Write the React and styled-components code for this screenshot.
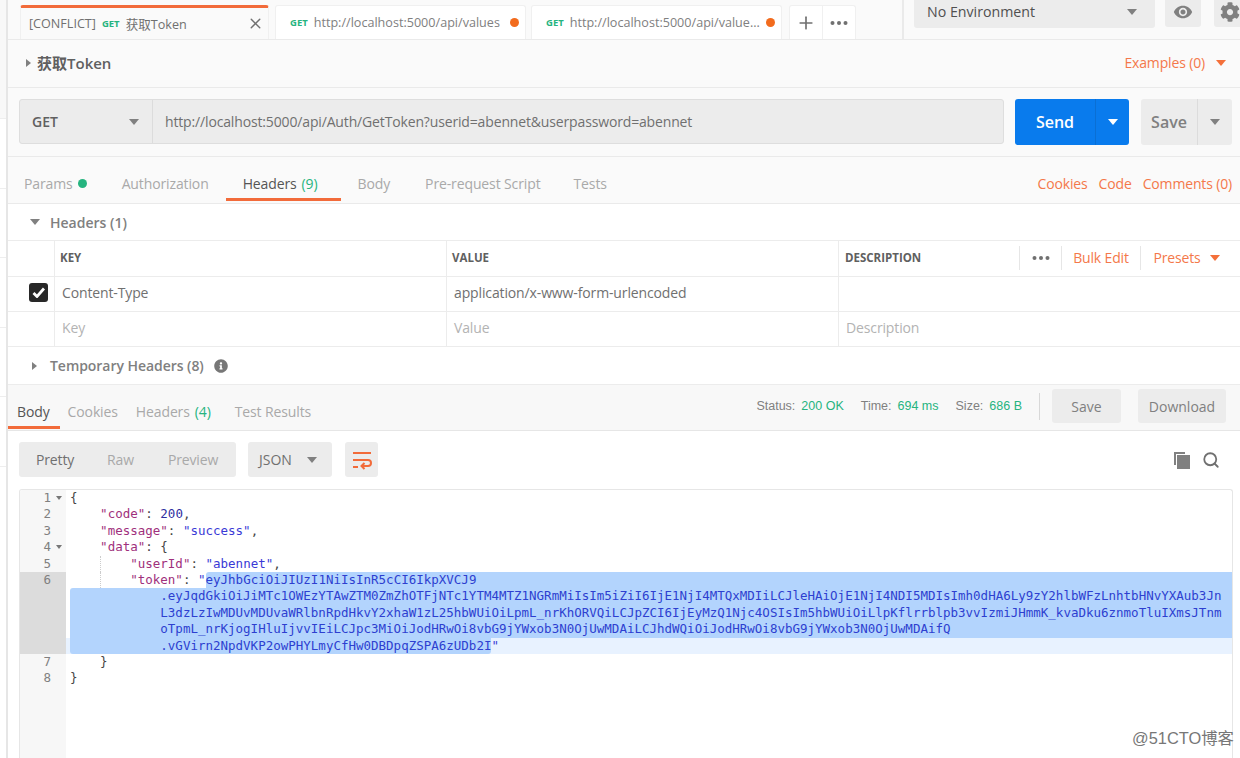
import styled, { createGlobalStyle } from "styled-components";
import { Plus, Search, X } from "lucide-react";
import { FaCog, FaInfoCircle } from "react-icons/fa";
import { MdVisibility } from "react-icons/md";

const UI_FONT = `"Open Sans", "Noto Sans CJK SC", sans-serif`;

const Global = createGlobalStyle`
  html, body { margin: 0; padding: 0; background: #fff; }
  body { width: 1240px; height: 758px; overflow: hidden; font-family: ${UI_FONT}; }
  * { box-sizing: border-box; }
`;

const Page = styled.div`
  display: flex;
  width: 1240px;
  height: 758px;
  overflow: hidden;
  position: relative;
`;

const Strip = styled.div`
  width: 8px;
  flex: none;
  border-right: 2px solid #e6e6e6;
  background: #fff;
`;
const StripTop = styled.div`
  height: 119px;
  background: #f8f8f8;
  border-bottom: 1px solid #eee;
`;
const StripRows = styled.div`
  height: 348px;
  background: repeating-linear-gradient(to bottom, #fff 0, #fff 68.6px, #eee 68.6px, #eee 69.6px);
`;

const Main = styled.div`
  flex: 1;
  min-width: 0;
  display: flex;
  flex-direction: column;
`;

const TabBar = styled.div`
  height: 40px;
  flex: none;
  display: flex;
  padding-left: 12px;
  background: #fafafa;
  border-bottom: 1px solid #eaeaea;
  overflow: hidden;
`;
const Tab = styled.div`
  flex: none;
  width: ${(p) => p.$w}px;
  margin-left: ${(p) => p.$gap || 0}px;
  margin-top: 5px;
  height: ${(p) => (p.$active ? 35 : 34)}px;
  display: flex;
  align-items: center;
  padding: 0 ${(p) => p.$pr || 6}px 1px ${(p) => p.$pl || 14}px;
  font-size: 12.6px;
  color: #808080;
  white-space: nowrap;
  background: ${(p) => (p.$active ? "#fafafa" : "#fff")};
  border: 1px solid #f0f0f0;
  border-bottom: none;
  border-top: ${(p) => (p.$active ? "3px solid #f26b3a" : "1px solid #f0f0f0")};
  border-radius: 3px 3px 0 0;
`;
const Conflict = styled.span`
  color: #707070;
  margin-right: 6px;
`;
const Method = styled.span`
  color: #26b47f;
  font-size: 9.5px;
  font-weight: 700;
  margin-right: 6px;
`;
const TabTitle = styled.span`
  flex: 1;
  min-width: 0;
  overflow: hidden;
  color: ${(p) => p.$color || "#808080"};
`;
const Dirty = styled.span`
  width: 9px;
  height: 9px;
  flex: none;
  margin-left: 5px;
  border-radius: 50%;
  background: #f26b1d;
`;
const TabActions = styled.div`
  display: flex;
  flex: none;
  width: 67px;
  margin: 5px 0 0 7px;
  height: 34px;
  background: #fff;
  border: 1px solid #f0f0f0;
  border-bottom: none;
  border-radius: 3px 3px 0 0;
`;
const TabAction = styled.div`
  flex: 1;
  display: flex;
  align-items: center;
  justify-content: center;
  color: #707070;
  & + & { border-left: 1px solid #f0f0f0; }
`;
const EnvArea = styled.div`
  display: flex;
  align-items: flex-start;
  margin-left: 46px;
  padding-left: 10px;
  border-left: 2px solid #eaeaea;
  flex: none;
`;
const EnvSelect = styled.div`
  width: 241px;
  height: 28px;
  display: flex;
  align-items: center;
  justify-content: space-between;
  padding: 0 18px 5px 13px;
  background: #ececec;
  border-radius: 0 0 3px 3px;
  color: #505050;
  font-size: 14.2px;
`;
const EnvButton = styled.div`
  width: ${(p) => p.$w}px;
  height: 27px;
  margin-left: ${(p) => p.$gap}px;
  display: flex;
  align-items: center;
  justify-content: ${(p) => p.$justify || "center"};
  background: #ececec;
  border-radius: 0 0 3px 3px;
  color: #808080;
  padding-bottom: 4px;
  padding-left: ${(p) => p.$pl || 0}px;
`;

const Caret = styled.span`
  display: inline-block;
  flex: none;
  width: 0;
  height: 0;
  ${(p) =>
    p.$dir === "right"
      ? `border-top: 4.5px solid transparent; border-bottom: 4.5px solid transparent; border-left: 5px solid ${p.$color || "#808080"};`
      : `border-left: 5px solid transparent; border-right: 5px solid transparent; border-top: 6px solid ${p.$color || "#808080"};`}
`;

const NameRow = styled.div`
  height: 48px;
  flex: none;
  display: flex;
  align-items: center;
  justify-content: space-between;
  padding: 0 14px 2px 18px;
  background: #fafafa;
  border-bottom: 1px solid #eaeaea;
`;
const RequestName = styled.div`
  display: flex;
  align-items: center;
  gap: 6px;
  font-size: 15px;
  font-weight: 600;
  color: #606060;
`;
const Link = styled.span`
  display: inline-flex;
  align-items: center;
  gap: ${(p) => p.$gap || 0}px;
  color: #f4784a;
  font-size: 14px;
  letter-spacing: -0.15px;
  white-space: nowrap;
`;

const UrlRow = styled.div`
  height: 69px;
  flex: none;
  display: flex;
  align-items: center;
  padding: 0 8px 1px 11px;
  background: #fafafa;
  border-bottom: 1px solid #eaeaea;
`;
const UrlGroup = styled.div`
  width: 985px;
  height: 45px;
  flex: none;
  display: flex;
  background: #ececec;
  border: 1px solid #dedede;
  border-radius: 3px;
`;
const MethodSelect = styled.div`
  width: 133px;
  flex: none;
  display: flex;
  align-items: center;
  justify-content: space-between;
  padding: 0 13px 0 12px;
  border-right: 1px solid #dcdcdc;
  color: #606060;
  font-size: 14px;
  font-weight: 600;
`;
const UrlText = styled.div`
  display: flex;
  align-items: center;
  padding-left: 12px;
  font-size: 14px;
  letter-spacing: -0.15px;
  color: #707070;
  white-space: nowrap;
`;
const SplitButton = styled.div`
  width: ${(p) => p.$w}px;
  height: 46px;
  margin-left: ${(p) => p.$gap}px;
  flex: none;
  display: flex;
  border-radius: 3px;
  background: ${(p) => (p.$primary ? "#097bed" : "#ececec")};
  color: ${(p) => (p.$primary ? "#fff" : "#808080")};
  font-size: 16px;
  font-weight: 600;
`;
const SplitMain = styled.div`
  flex: 1;
  display: flex;
  align-items: center;
  justify-content: center;
`;
const SplitArrow = styled.div`
  width: ${(p) => p.$w}px;
  flex: none;
  display: flex;
  align-items: center;
  justify-content: center;
  border-left: 1px solid ${(p) => (p.$primary ? "#0a6fd4" : "#dcdcdc")};
`;

const ReqTabs = styled.div`
  height: 47px;
  flex: none;
  display: flex;
  align-items: stretch;
  padding: 0 8px 0 0;
  background: #fafafa;
  border-bottom: 1px solid #eaeaea;
`;
const TabLabel = styled.div`
  display: flex;
  align-items: center;
  gap: 5px;
  padding: ${(p) => p.$pt}px ${(p) => p.$pr ?? 0}px 0 ${(p) => p.$pl ?? 0}px;
  margin-left: ${(p) => p.$ml || 0}px;
  margin-bottom: ${(p) => p.$mb}px;
  font-size: 14px;
  letter-spacing: -0.12px;
  color: ${(p) => (p.$active ? "#555" : "#a9a9a9")};
  border-bottom: 3px solid ${(p) => (p.$active ? "#f26b3a" : "transparent")};
  white-space: nowrap;
`;
const Count = styled.span`
  color: #26b47f;
`;
const GreenDot = styled.span`
  width: 9px;
  height: 9px;
  border-radius: 50%;
  background: #26b47f;
`;
const LinkGroup = styled.div`
  display: flex;
  align-items: center;
  gap: 11px;
  margin-left: auto;
  padding-top: 7px;
`;

const Section = styled.div`
  height: ${(p) => p.$h}px;
  flex: none;
  display: flex;
  align-items: center;
  gap: 10px;
  padding-left: ${(p) => p.$pl}px;
  color: #808080;
  font-size: 14px;
  font-weight: 600;
  white-space: nowrap;
`;
const TempLabel = styled.span`
  margin-left: 3px;
  letter-spacing: -0.05px;
`;

const Row = styled.div`
  height: ${(p) => p.$h}px;
  flex: none;
  display: grid;
  grid-template-columns: 46px 392px 392px 1fr;
  border-bottom: 1px solid #ececec;
  border-top: ${(p) => (p.$top ? "1px solid #ececec" : "none")};
`;
const Cell = styled.div`
  display: flex;
  align-items: center;
  padding-left: ${(p) => p.$pl ?? 7}px;
  padding-bottom: ${(p) => (p.$head ? 2 : 3)}px;
  font-size: ${(p) => (p.$head ? 11.5 : 14)}px;
  font-weight: ${(p) => (p.$head ? 700 : 400)};
  letter-spacing: ${(p) => (p.$head ? 0 : -0.13)}px;
  color: ${(p) => (p.$head ? "#606060" : p.$ghost ? "#b3b3b3" : "#707070")};
  border-left: ${(p) => (p.$first ? "none" : "1px solid #ececec")};
  white-space: nowrap;
`;
const Check = styled.span`
  width: 19px;
  height: 19px;
  margin-left: 21px;
  display: flex;
  align-items: center;
  justify-content: center;
  background: #282828;
  border-radius: 3px;
`;
const HeadActions = styled.div`
  display: flex;
  align-items: center;
  height: 24px;
  margin-left: auto;
  font-weight: 400;
`;
const HeadAction = styled.div`
  display: flex;
  align-items: center;
  width: ${(p) => p.$w}px;
  height: 100%;
  justify-content: center;
  padding-right: ${(p) => p.$pr || 0}px;
  border-left: 1px solid #e6e6e6;
`;

const ResTabs = styled.div`
  height: 47px;
  flex: none;
  display: flex;
  background: #f8f8f8;
  border-top: 1px solid #ececec;
  border-bottom: 1px solid #e6e6e6;
`;
const ResStatus = styled.div`
  margin-left: auto;
  display: flex;
  align-items: center;
  padding: 0 14px 3px 0;
`;
const Stat = styled.span`
  font-family: "Liberation Sans", sans-serif;
  font-size: 12.5px;
  color: #808080;
  margin-left: ${(p) => p.$ml}px;
`;
const StatValue = styled.span`
  color: #26b47f;
  margin-left: 6px;
`;
const ResDivider = styled.div`
  width: 1px;
  height: 27px;
  margin: 0 12px 0 17px;
  background: #d8d8d8;
`;
const ResButton = styled.div`
  width: ${(p) => p.$w}px;
  height: 34px;
  margin-left: ${(p) => p.$ml || 0}px;
  display: flex;
  align-items: center;
  justify-content: center;
  background: #ececec;
  border-radius: 3px;
  color: #808080;
  font-size: 14px;
`;

const Toolbar = styled.div`
  height: 58px;
  flex: none;
  display: flex;
  align-items: center;
  padding: 0 20px 1px 11px;
  color: #808080;
`;
const ViewGroup = styled.div`
  display: flex;
  align-items: center;
  width: 217px;
  height: 35px;
  background: #ececec;
  border-radius: 3px;
  font-size: 14px;
  letter-spacing: -0.15px;
`;
const ViewItem = styled.span`
  margin-left: ${(p) => p.$ml}px;
  color: ${(p) => (p.$active ? "#707070" : "#a9a9a9")};
`;
const FormatSelect = styled.div`
  width: 84px;
  height: 35px;
  margin-left: 12px;
  display: flex;
  align-items: center;
  justify-content: space-between;
  padding: 0 15px 0 11px;
  background: #ececec;
  border-radius: 3px;
  font-size: 14px;
  color: #707070;
`;
const WrapButton = styled.div`
  width: 33px;
  height: 35px;
  margin-left: 13px;
  display: flex;
  align-items: center;
  justify-content: center;
  background: #ececec;
  border-radius: 3px;
`;
const ToolIcons = styled.div`
  margin-left: auto;
  display: flex;
  align-items: center;
  gap: 12px;
`;

const Editor = styled.div`
  margin: 0 0 0 11px;
  width: 1214px;
  flex: 1;
  min-height: 0;
  display: flex;
  border: 1px solid #e6e6e6;
  border-bottom: none;
  border-radius: 3px 3px 0 0;
  overflow: hidden;
  font-family: "DejaVu Sans Mono", monospace;
  font-size: 12.5px;
  line-height: 16.4px;
`;
const Gutter = styled.div`
  width: 46px;
  flex: none;
  background: #f7f7f7;
  color: #808080;
`;
const GutterCell = styled.div`
  height: ${(p) => (p.$rows || 1) * 16.4}px;
  display: flex;
  justify-content: flex-end;
  padding-right: 15px;
  position: relative;
  background: ${(p) => (p.$active ? "#dcdcdc" : "transparent")};
`;
const Fold = styled.span`
  position: absolute;
  left: 36px;
  top: 6px;
  width: 0;
  height: 0;
  border-left: 3px solid transparent;
  border-right: 3px solid transparent;
  border-top: 4px solid #777;
`;
const Code = styled.div`
  flex: 1;
  min-width: 0;
`;
const CodeLine = styled.div`
  height: 16.4px;
  display: ${(p) => (p.$split ? "flex" : "block")};
  position: relative;
  padding-left: 4px;
  white-space: pre;
  color: #444;
  background: ${(p) => (p.$light ? "#e8f2ff" : "transparent")};
  ${(p) =>
    p.$guide &&
    `&::before {
      content: "";
      position: absolute;
      left: 34px;
      top: 0;
      bottom: 0;
      border-left: 1px dotted #ccc;
    }`}
`;
const Plain = styled.span`
  display: block;
  flex: none;
`;
const Sel = styled.span`
  display: block;
  background: #b3d4fd;
  flex: ${(p) => (p.$fill ? 1 : "none")};
  border-radius: ${(p) => p.$radius || 0};
  color: #2d3fd0;
`;
const Key = styled.span`
  color: #a0307c;
`;
const Num = styled.span`
  color: #2f2f9f;
`;
const Str = styled.span`
  color: #3a3ad6;
`;

const Watermark = styled.div`
  position: absolute;
  right: 6px;
  bottom: 9px;
  font-family: "Liberation Sans", "Noto Sans CJK SC", sans-serif;
  font-size: 16.4px;
  color: #777;
  text-shadow: 0 0 2px #fff;
`;

const Dots = ({ color = "#707070" }) => (
  <svg width="18" height="4" viewBox="0 0 18 4">
    <circle cx="2.5" cy="2" r="2" fill={color} />
    <circle cx="9" cy="2" r="2" fill={color} />
    <circle cx="15.5" cy="2" r="2" fill={color} />
  </svg>
);

const WrapIcon = () => (
  <svg width="20" height="20" viewBox="0 0 20 20" fill="none" stroke="#f26b3a" strokeWidth="2">
    <path d="M1 3h18" />
    <path d="M1 10h15a3 3 0 0 1 0 6h-6" />
    <path d="M12.5 13l-3 3 3 3" />
    <path d="M1 17h5" />
  </svg>
);

const CopyIcon = () => (
  <svg width="17" height="18" viewBox="0 0 17 18">
    <path d="M1 1h11v2H3v11H1z" fill="#808080" />
    <rect x="4" y="4" width="13" height="14" fill="#808080" />
  </svg>
);

const App = () => {
  return (
    <Page>
      <Global />
      <Strip>
        <StripTop />
        <StripRows />
      </Strip>
      <Main>
        <TabBar>
          <Tab $active $w={249} $pl={8} $pr={4}>
            <Conflict>[CONFLICT]</Conflict>
            <Method>GET</Method>
            <TabTitle $color="#707070">获取Token</TabTitle>
            <X size={17} color="#707070" />
          </Tab>
          <Tab $w={251} $gap={6}>
            <Method>GET</Method>
            <TabTitle>http://localhost:5000/api/values</TabTitle>
            <Dirty />
          </Tab>
          <Tab $w={251} $gap={5}>
            <Method>GET</Method>
            <TabTitle>http://localhost:5000/api/value...</TabTitle>
            <Dirty />
          </Tab>
          <TabActions>
            <TabAction>
              <Plus size={20} />
            </TabAction>
            <TabAction>
              <Dots />
            </TabAction>
          </TabActions>
          <EnvArea>
            <EnvSelect>
              No Environment
              <Caret />
            </EnvSelect>
            <EnvButton $w={36} $gap={10}>
              <MdVisibility size={20} />
            </EnvButton>
            <EnvButton $w={36} $gap={13} $justify="flex-start" $pl={6}>
              <FaCog size={20} />
            </EnvButton>
          </EnvArea>
        </TabBar>

        <NameRow>
          <RequestName>
            <Caret $dir="right" />
            获取Token
          </RequestName>
          <Link $gap={11}>
            Examples (0)
            <Caret $color="#f4703a" />
          </Link>
        </NameRow>

        <UrlRow>
          <UrlGroup>
            <MethodSelect>
              GET
              <Caret />
            </MethodSelect>
            <UrlText>http://localhost:5000/api/Auth/GetToken?userid=abennet&amp;userpassword=abennet</UrlText>
          </UrlGroup>
          <SplitButton $primary $w={114} $gap={11}>
            <SplitMain>Send</SplitMain>
            <SplitArrow $primary $w={34}>
              <Caret $color="#fff" />
            </SplitArrow>
          </SplitButton>
          <SplitButton $w={91} $gap={12}>
            <SplitMain>Save</SplitMain>
            <SplitArrow $w={35}>
              <Caret />
            </SplitArrow>
          </SplitButton>
        </UrlRow>

        <ReqTabs>
          <TabLabel $pt={12} $mb={2} $ml={16}>
            Params <GreenDot />
          </TabLabel>
          <TabLabel $pt={12} $mb={2} $ml={35}>Authorization</TabLabel>
          <TabLabel $active $pt={12} $mb={2} $ml={17} $pl={17} $pr={23}>
            Headers <Count>(9)</Count>
          </TabLabel>
          <TabLabel $pt={12} $mb={2} $ml={17}>Body</TabLabel>
          <TabLabel $pt={12} $mb={2} $ml={35}>Pre-request Script</TabLabel>
          <TabLabel $pt={12} $mb={2} $ml={33}>Tests</TabLabel>
          <LinkGroup>
            <Link>Cookies</Link>
            <Link>Code</Link>
            <Link>Comments (0)</Link>
          </LinkGroup>
        </ReqTabs>

        <Section $h={36} $pl={22}>
          <Caret />
          Headers (1)
        </Section>
        <Row $h={37} $top>
          <Cell $first />
          <Cell $head $pl={5}>KEY</Cell>
          <Cell $head $pl={5}>VALUE</Cell>
          <Cell $head $pl={6}>
            DESCRIPTION
            <HeadActions>
              <HeadAction $w={42}>
                <Dots />
              </HeadAction>
              <HeadAction $w={79}>
                <Link>Bulk Edit</Link>
              </HeadAction>
              <HeadAction $w={100} $pr={8}>
                <Link $gap={9}>
                  Presets
                  <Caret $color="#f4703a" />
                </Link>
              </HeadAction>
            </HeadActions>
          </Cell>
        </Row>
        <Row $h={35}>
          <Cell $first $pl={0}>
            <Check>
              <svg width="13" height="11" viewBox="0 0 13 11" fill="none" stroke="#fff" strokeWidth="2.8">
                <path d="M1.5 6l3.5 3.5 7-8" />
              </svg>
            </Check>
          </Cell>
          <Cell>Content-Type</Cell>
          <Cell>application/x-www-form-urlencoded</Cell>
          <Cell />
        </Row>
        <Row $h={35}>
          <Cell $first />
          <Cell $ghost>Key</Cell>
          <Cell $ghost>Value</Cell>
          <Cell $ghost>Description</Cell>
        </Row>
        <Section $h={37} $pl={24}>
          <Caret $dir="right" />
          <TempLabel>Temporary Headers (8)</TempLabel>
          <FaInfoCircle size={14} color="#777" />
        </Section>

        <ResTabs>
          <TabLabel $active $pt={11} $mb={1} $pl={9} $pr={10}>Body</TabLabel>
          <TabLabel $pt={11} $mb={1} $ml={8}>Cookies</TabLabel>
          <TabLabel $pt={11} $mb={1} $ml={18}>
            Headers <Count>(4)</Count>
          </TabLabel>
          <TabLabel $pt={11} $mb={1} $ml={24}>Test Results</TabLabel>
          <ResStatus>
            <Stat $ml={0}>
              Status:<StatValue>200 OK</StatValue>
            </Stat>
            <Stat $ml={17}>
              Time:<StatValue>694 ms</StatValue>
            </Stat>
            <Stat $ml={17}>
              Size:<StatValue>686 B</StatValue>
            </Stat>
            <ResDivider />
            <ResButton $w={69}>Save</ResButton>
            <ResButton $w={88} $ml={17}>Download</ResButton>
          </ResStatus>
        </ResTabs>

        <Toolbar>
          <ViewGroup>
            <ViewItem $active $ml={17}>Pretty</ViewItem>
            <ViewItem $ml={33}>Raw</ViewItem>
            <ViewItem $ml={34}>Preview</ViewItem>
          </ViewGroup>
          <FormatSelect>
            JSON
            <Caret />
          </FormatSelect>
          <WrapButton>
            <WrapIcon />
          </WrapButton>
          <ToolIcons>
            <CopyIcon />
            <Search size={18} color="#707070" strokeWidth={2.4} />
          </ToolIcons>
        </Toolbar>

        <Editor>
          <Gutter>
            <GutterCell>1<Fold /></GutterCell>
            <GutterCell>2</GutterCell>
            <GutterCell>3</GutterCell>
            <GutterCell>4<Fold /></GutterCell>
            <GutterCell>5</GutterCell>
            <GutterCell $active $rows={5}>6</GutterCell>
            <GutterCell>7</GutterCell>
            <GutterCell>8</GutterCell>
          </Gutter>
          <Code>
            <CodeLine>{"{"}</CodeLine>
            <CodeLine>{"    "}<Key>"code"</Key>: <Num>200</Num>,</CodeLine>
            <CodeLine>{"    "}<Key>"message"</Key>: <Str>"success"</Str>,</CodeLine>
            <CodeLine>{"    "}<Key>"data"</Key>: {"{"}</CodeLine>
            <CodeLine $guide>{"        "}<Key>"userId"</Key>: <Str>"abennet"</Str>,</CodeLine>
            <CodeLine $split $guide>
              <Plain>{"        "}<Key>"token"</Key>: <Str>"</Str></Plain>
              <Sel $fill $radius="3px 0 0 0">eyJhbGciOiJIUzI1NiIsInR5cCI6IkpXVCJ9</Sel>
            </CodeLine>
            <CodeLine $split>
              <Sel $fill $radius="3px 0 0 0">{"            "}.eyJqdGkiOiJiMTc1OWEzYTAwZTM0ZmZhOTFjNTc1YTM4MTZ1NGRmMiIsIm5iZiI6IjE1NjI4MTQxMDIiLCJleHAiOjE1NjI4NDI5MDIsImh0dHA6Ly9zY2hlbWFzLnhtbHNvYXAub3Jn</Sel>
            </CodeLine>
            <CodeLine $split>
              <Sel $fill>{"            "}L3dzLzIwMDUvMDUvaWRlbnRpdHkvY2xhaW1zL25hbWUiOiLpmL_nrKhORVQiLCJpZCI6IjEyMzQ1Njc4OSIsIm5hbWUiOiLlpKflrrblpb3vvIzmiJHmmK_kvaDku6znmoTluIXmsJTnm</Sel>
            </CodeLine>
            <CodeLine $split>
              <Sel $fill>{"            "}oTpmL_nrKjogIHluIjvvIEiLCJpc3MiOiJodHRwOi8vbG9jYWxob3N0OjUwMDAiLCJhdWQiOiJodHRwOi8vbG9jYWxob3N0OjUwMDAifQ</Sel>
            </CodeLine>
            <CodeLine $split $light>
              <Sel $radius="0 0 3px 3px">{"            "}.vGVirn2NpdVKP2owPHYLmyCfHw0DBDpqZSPA6zUDb2I</Sel>
              <Str>"</Str>
            </CodeLine>
            <CodeLine>{"    }"}</CodeLine>
            <CodeLine>{"}"}</CodeLine>
          </Code>
        </Editor>
      </Main>
      <Watermark>@51CTO博客</Watermark>
    </Page>
  );
};

export default App;
